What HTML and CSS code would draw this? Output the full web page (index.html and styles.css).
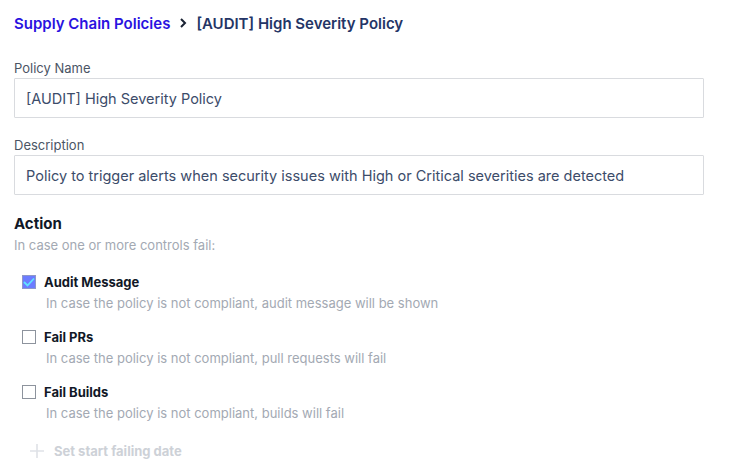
FILE: index.html
```html
<!DOCTYPE html>
<html lang="en">
<head>
  <meta charset="UTF-8">
  <meta name="viewport" content="width=device-width, initial-scale=1.0">
  <title>Supply Chain Policies</title>
  <link rel="stylesheet" href="styles.css">
</head>
<body>
  <div class="page">
    <div class="breadcrumb">
      <a href="#" class="crumb-link">Supply Chain Policies</a>
      <svg class="crumb-sep" width="10" height="12" viewBox="0 0 10 12"><path d="M3 2l4 4-4 4" fill="none" stroke="#1a2233" stroke-width="2"/></svg>
      <span class="crumb-current">[AUDIT] High Severity Policy</span>
    </div>

    <div class="form-group">
      <label class="field-label" for="name">Policy Name</label>
      <input class="field" type="text" id="name" value="[AUDIT] High Severity Policy">
    </div>

    <div class="form-group">
      <label class="field-label" for="desc">Description</label>
      <input class="field" type="text" id="desc" value="Policy to trigger alerts when security issues with High or Critical severities are detected">
    </div>

    <div class="action">
      <h2>Action</h2>
      <p class="hint">In case one or more controls fail:</p>

      <div class="options">
        <div class="option">
          <div class="option-row">
            <span class="box checked">
              <svg width="12" height="10" viewBox="0 0 12 10"><path d="M1 5l3.5 3.5L11 1.5" fill="none" stroke="#62e3ff" stroke-width="1.8"/></svg>
            </span>
            <span class="option-title">Audit Message</span>
          </div>
          <div class="option-desc">In case the policy is not compliant, audit message will be shown</div>
        </div>
        <div class="option">
          <div class="option-row">
            <span class="box"></span>
            <span class="option-title">Fail PRs</span>
          </div>
          <div class="option-desc">In case the policy is not compliant, pull requests will fail</div>
        </div>
        <div class="option">
          <div class="option-row">
            <span class="box"></span>
            <span class="option-title">Fail Builds</span>
          </div>
          <div class="option-desc">In case the policy is not compliant, builds will fail</div>
        </div>
      </div>

      <button class="add-date" type="button">
        <svg width="16" height="16" viewBox="0 0 16 16"><path d="M8 1v14M1 8h14" stroke="#dfe2e7" stroke-width="1.6"/></svg>
        Set start failing date
      </button>
    </div>
  </div>
</body>
</html>
```

FILE: styles.css
```css
body {
  margin: 0;
  font-family: Inter, "Noto Sans", sans-serif;
  background-color: #ffffff;
  color: #1a2233;
}
.page {
  padding: 13px 51px 0 14px;
}
.breadcrumb {
  display: flex;
  align-items: center;
  gap: 8px;
  font-size: 15px;
  font-weight: 600;
  height: 20px;
  margin-bottom: 27px;
}
.crumb-link {
  color: #2a12e0;
  text-decoration: none;
}
.crumb-current {
  color: #243566;
}
.form-group {
  margin-bottom: 19px;
}
.field-label {
  display: block;
  font-size: 13px;
  color: #4b5565;
  margin-bottom: 2px;
}
.field {
  display: block;
  box-sizing: border-box;
  width: 690px;
  height: 40px;
  padding: 0 11px;
  border: 1px solid #d9dbdf;
  border-radius: 1px;
  font-family: Inter, "Noto Sans", sans-serif;
  font-size: 14.5px;
  color: #3c4c6a;
  outline: none;
}
.action h2 {
  font-size: 15px;
  font-weight: 700;
  margin: 7px 0 4px;
  color: #111827;
}
.hint {
  font-size: 13px;
  color: #a3a9b3;
  margin: 0 0 20px;
}
.options {
  padding-left: 8px;
  display: flex;
  flex-direction: column;
  gap: 17px;
}
.option-row {
  display: flex;
  align-items: center;
  gap: 8px;
  height: 18px;
}
.box {
  box-sizing: border-box;
  width: 14px;
  height: 14px;
  border: 1px solid #8d939d;
  display: flex;
  align-items: center;
  justify-content: center;
}
.box.checked {
  background-color: #6c7cff;
  border-color: #8f98c8;
}
.option-title {
  font-size: 13px;
  font-weight: 700;
  color: #111827;
}
.option-desc {
  font-size: 13px;
  color: #a3a9b3;
  margin: 4px 0 0 24px;
}
.add-date {
  display: flex;
  align-items: center;
  gap: 9px;
  margin: 22px 0 0 15px;
  padding: 0;
  border: none;
  background: none;
  font-family: Inter, "Noto Sans", sans-serif;
  font-size: 13px;
  font-weight: 700;
  color: #cdd1d7;
}
```
